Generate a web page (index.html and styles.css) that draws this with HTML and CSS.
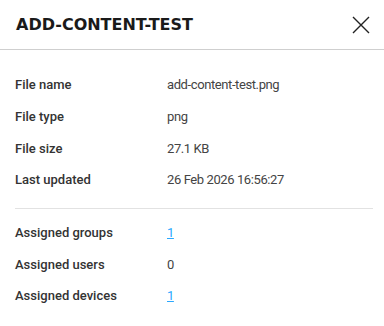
FILE: index.html
```html
<!DOCTYPE html>
<html>
<head>
    <meta charset="utf-8">
    <meta name="viewport" content="width=device-width, initial-scale=1">
    <title>add-content-test</title>
    <link rel="stylesheet" href="styles.css">
</head>
<body>
    <div class="panel">
        <div class="panel-header">
            <h2 class="panel-title">ADD-CONTENT-TEST</h2>
            <button class="close-btn" aria-label="Close">
                <svg width="18" height="18" viewBox="0 0 18 18">
                    <path d="M1 1 L17 17 M17 1 L1 17" stroke="#222" stroke-width="1.4" fill="none"/>
                </svg>
            </button>
        </div>

        <div class="panel-body">
            <div class="info-row"><span class="info-label">File name</span><span class="info-value">add-content-test.png</span></div>
            <div class="info-row"><span class="info-label">File type</span><span class="info-value">png</span></div>
            <div class="info-row"><span class="info-label">File size</span><span class="info-value">27.1 KB</span></div>
            <div class="info-row"><span class="info-label">Last updated</span><span class="info-value">26 Feb 2026 16:56:27</span></div>

            <hr class="divider">

            <div class="info-row"><span class="info-label">Assigned groups</span><a class="info-value link" href="#">1</a></div>
            <div class="info-row"><span class="info-label">Assigned users</span><span class="info-value">0</span></div>
            <div class="info-row"><span class="info-label">Assigned devices</span><a class="info-value link" href="#">1</a></div>
        </div>
    </div>
</body>
</html>
```

FILE: styles.css
```css
body {
    margin: 0;
    background-color: #fff;
    color: #333;
    font-family: Roboto, "Noto Sans", sans-serif;
}

.panel {
    width: 384px;
}

.panel-header {
    height: 49px;
    display: flex;
    align-items: center;
    justify-content: space-between;
    padding: 0 14px 0 16px;
    border-bottom: 1px solid #cfcfcf;
    box-sizing: content-box;
}

.panel-title {
    margin: 0;
    font-family: "DejaVu Sans", sans-serif;
    font-size: 16px;
    font-weight: bold;
    color: #1a1a1a;
    letter-spacing: 0;
}

.close-btn {
    border: none;
    background: none;
    padding: 0;
    width: 18px;
    height: 18px;
    cursor: pointer;
}

.panel-body {
    padding: 19px 11px 0 15px;
}

.info-row {
    display: flex;
    align-items: center;
    height: 31.67px;
    font-size: 13px;
}

.info-label {
    width: 152px;
    font-weight: 500;
    color: #333;
}

.info-value {
    color: #444;
    letter-spacing: -0.4px;
}

.link {
    color: #2aa8ff;
    text-decoration: underline;
}

.divider {
    border: none;
    border-top: 1px solid #e2e2e2;
    margin: 12px 0 8px;
}
```
